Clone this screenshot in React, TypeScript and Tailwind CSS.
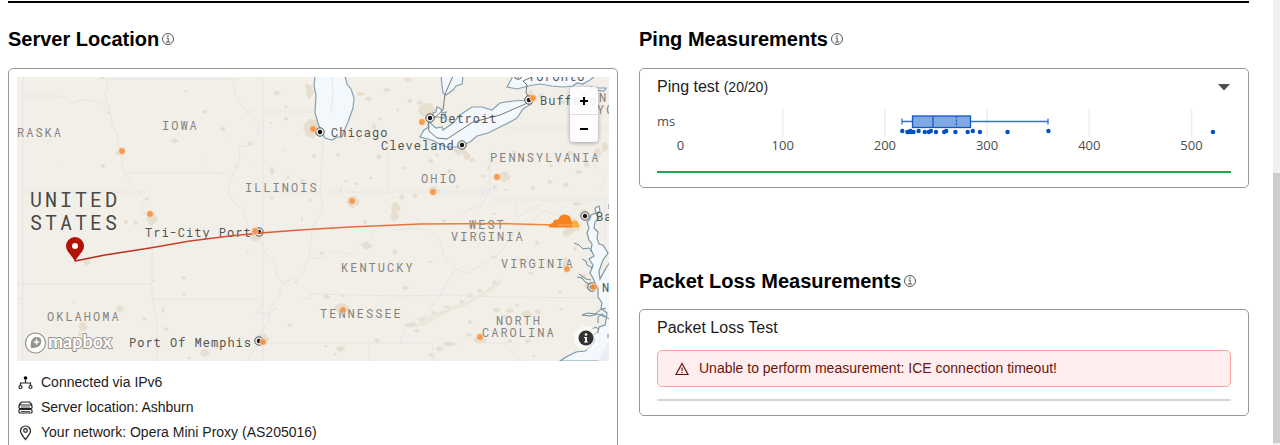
import type { ReactNode } from "react";

const pings = [217, 222, 223, 225, 226, 228, 233, 239, 243, 245, 250, 258, 260, 269, 281, 286, 293, 320, 360, 521];
const ticks = [0, 100, 200, 300, 400, 500];

const msToX = (ms: number) => 23.5 + ms * 1.022;

const states: [string, number, number][] = [
  ["RASKA", 17, 137],
  ["IOWA", 162, 130],
  ["ILLINOIS", 245, 192],
  ["OHIO", 421, 183],
  ["PENNSYLVANIA", 490, 162],
  ["WEST", 469, 229],
  ["VIRGINIA", 451, 241],
  ["VIRGINIA", 501, 268],
  ["KENTUCKY", 341, 272],
  ["TENNESSEE", 320, 318],
  ["NORTH", 496, 325],
  ["CAROLINA", 482, 337],
  ["OKLAHOMA", 47, 321],
  ["N", 599, 102],
  ["YO", 597, 114],
];

const cities: [string, number, number, number, number][] = [
  ["Chicago", 331, 137, 320, 132],
  ["Detroit", 440, 123, 430, 118],
  ["Cleveland", 381, 150, 462, 145],
  ["Toronto", 528, 81, 518, 75],
  ["Buffalo", 540, 105, 529, 100],
  ["Tri-City Port", 145, 237, 259, 232],
  ["Port Of Memphis", 129, 347, 259, 341],
  ["Ba", 596, 221, 585, 216],
  ["N", 602, 292, 592, 287],
];

const edgeNodes = [
  [122, 151], [150, 214], [313, 129], [422, 122], [533, 98], [352, 201], [433, 192], [497, 177],
  [255, 231], [263, 342], [343, 310], [480, 337], [567, 269], [594, 287],
];

// x, y, width, height of built-up areas
const urban = [
  [102, 78, 4, 3], [109, 113, 4, 3], [120, 153, 10, 5], [103, 166, 5, 4], [62, 163, 2, 2], [175, 141, 7, 5],
  [186, 91, 3, 2], [205, 112, 5, 4], [223, 129, 5, 4], [227, 140, 2, 2], [250, 144, 6, 5], [277, 93, 7, 5],
  [286, 107, 3, 3], [286, 119, 5, 4], [271, 123, 2, 3], [272, 171, 5, 9], [247, 112, 3, 3], [285, 150, 3, 2],
  [310, 92, 8, 14], [313, 129, 20, 20], [307, 86, 4, 5], [314, 156, 4, 4], [254, 162, 2, 2], [205, 160, 2, 2],
  [288, 177, 3, 4], [303, 181, 6, 4], [272, 198, 4, 4], [236, 166, 2, 3], [152, 219, 11, 14], [147, 199, 4, 3],
  [126, 222, 5, 4], [136, 223, 5, 5], [87, 262, 7, 7], [184, 278, 5, 4], [184, 294, 4, 4], [154, 281, 3, 3],
  [120, 309, 8, 7], [163, 310, 3, 6], [74, 302, 3, 2], [83, 327, 9, 10], [80, 334, 4, 5], [145, 319, 5, 3],
  [166, 329, 5, 4], [205, 353, 10, 8], [189, 358, 4, 3], [218, 347, 4, 3], [256, 236, 14, 12], [248, 252, 2, 3],
  [262, 339, 16, 11], [290, 325, 5, 4], [296, 282, 4, 2], [275, 309, 3, 2], [302, 219, 2, 6], [310, 200, 3, 4],
  [334, 92, 5, 4], [361, 94, 9, 4], [369, 99, 7, 5], [387, 90, 7, 4], [408, 80, 8, 5], [410, 101, 5, 5],
  [428, 111, 20, 16], [420, 103, 7, 5], [425, 132, 5, 7], [398, 110, 3, 4], [374, 127, 5, 7], [380, 119, 4, 3],
  [359, 139, 4, 4], [338, 155, 4, 4], [379, 157, 6, 5], [405, 168, 4, 3], [371, 178, 4, 3], [346, 181, 4, 3],
  [341, 190, 3, 3], [353, 202, 14, 12], [357, 184, 5, 3], [396, 208, 10, 12], [402, 197, 6, 5], [395, 216, 9, 12],
  [434, 191, 12, 10], [415, 196, 5, 5], [431, 161, 5, 4], [437, 155, 4, 3], [460, 151, 13, 9], [467, 156, 8, 9],
  [450, 171, 5, 5], [472, 160, 6, 4], [457, 187, 3, 4], [483, 176, 5, 3], [505, 177, 12, 11], [495, 187, 5, 4],
  [506, 190, 4, 3], [489, 168, 4, 5], [531, 97, 7, 14], [541, 96, 5, 5], [563, 102, 8, 4], [514, 152, 5, 4],
  [551, 166, 4, 3], [533, 188, 5, 4], [550, 182, 6, 4], [566, 185, 6, 5], [579, 172, 8, 4], [587, 165, 7, 5],
  [598, 153, 8, 10], [605, 147, 7, 10], [570, 153, 5, 5], [577, 204, 8, 4], [573, 226, 17, 15], [567, 233, 9, 8],
  [584, 214, 10, 10], [581, 204, 4, 3], [367, 246, 11, 8], [395, 252, 5, 5], [365, 222, 4, 5], [322, 253, 5, 4],
  [333, 228, 3, 4], [396, 271, 6, 2], [406, 288, 8, 4], [430, 262, 5, 2], [342, 308, 16, 10], [327, 297, 6, 4],
  [343, 296, 4, 3], [377, 341, 6, 5], [341, 349, 9, 6], [326, 346, 4, 3], [335, 354, 4, 3], [412, 325, 16, 5],
  [424, 320, 11, 6], [417, 331, 6, 4], [434, 313, 5, 4], [447, 307, 8, 3], [462, 302, 6, 4], [470, 296, 7, 5],
  [480, 291, 6, 4], [495, 283, 6, 5], [497, 310, 8, 5], [510, 311, 9, 5], [505, 317, 5, 4], [517, 305, 4, 3],
  [450, 344, 14, 5], [440, 349, 9, 5], [432, 355, 6, 4], [480, 340, 14, 8], [469, 335, 6, 4], [470, 322, 5, 4],
  [527, 314, 12, 7], [538, 312, 7, 5], [528, 341, 6, 5], [510, 341, 5, 4], [550, 332, 6, 5], [561, 309, 4, 3],
  [534, 356, 4, 3], [566, 265, 7, 16], [531, 273, 5, 3], [494, 257, 6, 3], [521, 260, 5, 4], [511, 235, 5, 4],
  [537, 243, 4, 5], [549, 226, 5, 3], [463, 241, 4, 4], [471, 226, 5, 3], [590, 286, 12, 9], [583, 277, 6, 7],
  [560, 292, 4, 3], [575, 249, 4, 4], [494, 214, 4, 2], [444, 221, 5, 3],
];

const blob = ([x, y, w, h]: number[]) => {
  const a = w / 2;
  const b = h / 2;
  return `M${x - a} ${y}L${x - a * 0.8} ${y - b * 0.6}L${x - a * 0.3} ${y - b}L${x + a * 0.4} ${y - b * 0.9}L${x + a * 0.6} ${y - b * 0.4}L${x + a} ${y - b * 0.2}L${x + a * 0.7} ${y + b * 0.6}L${x + a * 0.3} ${y + b * 0.6}L${x} ${y + b}L${x - a * 0.6} ${y + b * 0.7}Z`;
};

function ServerMap() {
  return (
    <svg
      viewBox="17 77 592 284"
      preserveAspectRatio="xMidYMid slice"
      role="img"
      aria-label="Map of the route from your network to the server"
      className="block h-[284px] w-full bg-[#f2efe9]"
    >
      <defs>
        <linearGradient id="route" gradientUnits="userSpaceOnUse" x1="75" y1="0" x2="555" y2="0">
          <stop offset="0" stopColor="#b9201a" />
          <stop offset="0.5" stopColor="#e06a3c" />
          <stop offset="1" stopColor="#f6863a" />
        </linearGradient>
      </defs>

      <path d={urban.map(blob).join("")} fill="#e6dece" />

      {/* state lines and rivers */}
      <g fill="none" stroke="#e6e5e6" strokeWidth="1">
        <path d="M23 77V361M17 192H145M263 77V361M388 138V195M263 192H490M17 96H60L66 99L72 103L80 100L97 101L104 107L110 112L112 125L117 134L118 145L121 152L122 163L125 173L131 184L137 190L145 200L141 208L145 214L152 225V283M106 79H233M106 79L108 88L105 95L110 112" />
        <path d="M233 79L235 95L247 112L252 117L259 125L258 136L252 145L238 147L240 157L237 168L231 178L222 173H125M247 112H335M231 178L228 190L232 200L243 210L248 225L258 237L265 253L275 260L277 277L283 283L278 299L270 308L269 322L262 330L256 345L248 361M283 283L302 276L309 258L312 230L323 208L320 195L323 140" />
        <path d="M17 284H152V299L157 318V361M152 299H258L263 304L256 313H270M17 299H23M270 343H433V361M300 299H310V294L400 296L450 295L500 297L609 298M369 343V361M484 343H505L520 361" />
        <path d="M309 258L322 258L331 251L350 254L361 244L372 239L373 230L385 226L398 230L408 228L430 230L440 241L444 256L455 269L468 273L490 260L500 253L512 235L528 224L545 210L556 215L568 205M455 269L440 295L424 317L406 324L400 343M460 216L468 210L482 205L490 190V150M490 200H607M516 200V217L538 206L548 200M508 128H609M603 150L594 165L606 178L600 190M605 196V240" />
      </g>
      <path d="M412 328L424 319L434 313L445 310L453 306L466 303L478 295L488 289L496 283L501 278L500 284L493 290L482 296L474 301L464 306L448 312L436 318L426 325Z" fill="#ece6da" />

      {/* lakes */}
      <g fill="#f3f8fc" stroke="#84a0b0" strokeWidth="1.2">
        <path d="M315 76L314 86L316 95L315 113L318 123L321 131L325 138L332 140L337 137L342 137L345 129L348 122L353 108L354 98L351 89L347 84L345 76Z" />
        <path d="M441 76L442 85L443 93L446 95L453 90L456 86L462 84L463 76Z" />
        <path d="M434 117L433 113L436 112L437 107L441 109L442 113L446 112L444 118L438 117Z" />
        <path d="M428 121L429 127L424 130L420 137L428 139L434 141L439 144L447 147L457 147L470 142L477 136L488 133L500 127L510 122L517 118L523 109L531 104L527 100L513 101L500 103L492 110L482 107L472 107L463 113L458 117L453 123L443 130L442 127L436 128Z" />
        <path d="M513 76L507 87L517 89L528 86L540 84L552 86L563 87L573 86L577 83L583 84L590 80L595 76Z" />
        <path d="M590 87L596 88H606L604 91L596 90Z" />
      </g>
      <g fill="none" stroke="#77797c" strokeWidth="1">
        <path d="M453 76L445 94L443 110L433 119L428 124L429 131L437 138L447 139L473 122L500 115L530 102L526 92L527 85L523 81L532 77" />
      </g>
      <path d="M332 77L333 95L331 112H335" fill="none" stroke="#e5e8ec" />

      {/* Chesapeake Bay and the Atlantic coast */}
      <path
        d="M599 206L595 208L596 213L591 215L590 219L587 222L589 228L587 233L589 240L592 244L591 250L594 256L589 259L593 265L590 273L593 278L595 283L598 288L598 297L602 303L601 308L607 313L606 320L605 325L599 327L598 332L593 335L595 341L590 347L585 351L576 352L570 355L566 357L560 361H610V262L606 268L600 279L599 271L603 260L608 253L603 245L599 244L597 238L598 232L594 228L595 222L599 218L596 214L600 211Z"
        fill="#f3f8fc"
        stroke="#7b98a8"
        strokeWidth="1.2"
      />
      <path d="M609 340L598 361H610Z" fill="#e9eff5" />
      <path
        d="M574 243L579 245L583 249L589 248L592 252M582 259L586 261L587 265L593 268M577 277L582 278L585 282L591 285M579 274L586 279L591 280M582 315L588 313L595 314L600 310L606 308M582 315L590 316L598 314L605 317M598 323L598 317L602 314L609 319M592 329L596 327L599 330M609 204V209M608 334V338"
        fill="none"
        stroke="#6d8b9c"
      />

      <g className="font-['Roboto_Mono','DejaVu_Sans_Mono','Liberation_Mono',monospace]">
        <g className="text-[12px] tracking-[2px]" fill="#85837f">
          {states.map(([name, x, y]) => (
            <text key={`${name}-${x}`} x={x} y={y}>
              {name}
            </text>
          ))}
        </g>
        <g className="text-[20px] tracking-[3px]" fill="#484846">
          <text x="30" y="207">UNITED</text>
          <text x="30" y="230">STATES</text>
        </g>
        <text x="477" y="196" className="text-[10px]" fill="#f6f5f3" stroke="#dddddf" strokeWidth="1" paintOrder="stroke">
          40°
        </text>
        {cities.map(([name, x, y, cx, cy]) => (
          <g key={`${name}-${x}`}>
            <circle cx={cx} cy={cy} r="4.2" fill="#f2efe9" stroke="#444" strokeWidth="0.9" />
            <circle cx={cx} cy={cy} r="2.2" fill="#111" />
            <text x={x} y={y} className="text-[12px] tracking-[1px]" fill="#555553">
              {name}
            </text>
          </g>
        ))}
      </g>

      <polyline
        points="75,261 105,255 150,248 190,241 230,236 260,233 300,230 350,227 420,224 500,223.5 555,225"
        fill="none"
        stroke="url(#route)"
        strokeWidth="1.5"
      />
      {edgeNodes.map(([x, y]) => (
        <circle key={`${x}-${y}`} cx={x} cy={y} r="3.4" fill="#f6923f" fillOpacity="0.9" stroke="#f8f0e6" strokeWidth="0.6" />
      ))}

      {/* destination cloud */}
      <path d="M571 227.500C571 223 572 220.500 575 220.500C578 221 579 224 579 227.500Z" fill="#fbad41" />
      <path d="M549 227.500C549 224.500 551 223 553 223C553 220 556 218.500 558 220C559 216 562 214 565 214.500C569 215 571 217 571 220C572.500 222 572.500 225 572 227.500Z" fill="#f6821f" />
      <path d="M557 225H574" stroke="#fbb57a" strokeWidth="0.8" />

      {/* pin */}
      <path d="M75 262C73 256 66 252 66 246A9 9 0 0 1 84 246C84 252 77 256 75 262Z" fill="#b31208" />
      <circle cx="75" cy="246" r="3" fill="#fff" />

      {/* mapbox mark */}
      <circle cx="35.5" cy="343" r="10" fill="#fff" stroke="#969491" strokeWidth="1.2" />
      <path d="M31 348C30 341 32 337 37 337C41 337 42 340 41 343C40 347 36 348 31 348Z" fill="#969491" />
      <path d="M36.500 338.500L37.500 341L40 342L37.500 343L36.500 345.500L35.500 343L33 342L35.500 341Z" fill="#fff" />
      <text
        x="48"
        y="348"
        className="font-['Lato',sans-serif] text-[18px] font-bold"
        fill="#fff"
        stroke="#969491"
        strokeWidth="2"
        strokeLinejoin="round"
        paintOrder="stroke"
      >
        mapbox
      </text>
    </svg>
  );
}

function PingChart() {
  return (
    <svg viewBox="0 0 574 48" role="img" aria-label="Ping times in milliseconds" className="block w-full">
      <g stroke="#eeeeee" strokeWidth="1.500">
        {ticks.slice(1).map((t) => (
          <line key={t} x1={msToX(t)} x2={msToX(t)} y1="0" y2="28" />
        ))}
      </g>
      <g stroke="#3873cf" strokeWidth="1.300" fill="none">
        <path d="M245 12.500H255M313.500 12.500H391M245 9.500V15.500M391 9.500V15.500" />
        <rect x="255.500" y="7" width="58" height="11.500" fill="#80a8e2" stroke="#1558c7" />
        <path d="M276 7V18.500" stroke="#1558c7" />
        <path d="M299.500 7V18.500" stroke="#1558c7" strokeDasharray="2 1.500" />
      </g>
      {pings.map((p, i) => (
        <circle key={p} cx={msToX(p)} cy={i % 3 === 0 ? 22 : 23} r="2.200" fill="#0051c3" />
      ))}
      <g className="font-['Open_Sans',sans-serif] text-[13px]" fill="#4d4d4d">
        <text x="0" y="17">ms</text>
        {ticks.map((t) => (
          <text key={t} x={msToX(t)} y="41" textAnchor="middle">
            {t}
          </text>
        ))}
      </g>
    </svg>
  );
}

function SectionHeading({ children }: { children: string }) {
  return (
    <div className="flex h-6 items-center gap-0.5">
      <h2 className="text-[20px] leading-6 font-bold text-black">{children}</h2>
      <button type="button" aria-label={`About ${children}`}>
        <svg viewBox="0 0 14 14" className="size-3.5" fill="none" stroke="#555">
          <circle cx="7" cy="7" r="5.500" />
          <path d="M5.500 6H7.200V10M5 10H9.200" />
          <path d="M6.300 4H7.700" strokeWidth="1.300" />
        </svg>
      </button>
    </div>
  );
}

function InfoRow({ icon, children }: { icon: ReactNode; children: ReactNode }) {
  return (
    <li className="flex h-[25px] items-center gap-2">
      <svg viewBox="0 0 16 16" className="size-4" fill="none" stroke="#222" strokeWidth="1.200">
        {icon}
      </svg>
      <span>{children}</span>
    </li>
  );
}

export default function App() {
  return (
    <div className="flex h-screen overflow-hidden bg-white font-['Liberation_Sans',Arial,sans-serif] text-[#1d1d1d]">
      <main className="min-w-0 flex-1 pt-px pr-6 pl-2">
        <div className="h-0.5 bg-black" />
        <div className="grid grid-cols-2 items-start gap-[21px] pt-6">
          <section>
            <SectionHeading>Server Location</SectionHeading>
            <div className="mt-[17px] rounded-[5px] border border-[#999] px-2 pt-2 pb-8">
              <div className="relative">
                <ServerMap />
                <div className="absolute top-2.5 right-[11px] flex w-7 flex-col rounded-sm bg-white/90 text-black shadow-[0_1px_4px_rgba(0,0,0,0.35)]">
                  <button type="button" aria-label="Zoom in" className="flex h-7 items-center justify-center border-b border-[#ddd]">
                    <svg viewBox="0 0 10 10" className="size-2.5" stroke="#000" strokeWidth="2">
                      <path d="M1 5H9M5 1V9" />
                    </svg>
                  </button>
                  <button type="button" aria-label="Zoom out" className="flex h-[27px] items-center justify-center">
                    <svg viewBox="0 0 10 10" className="size-2.5" stroke="#000" strokeWidth="2">
                      <path d="M1 5H9" />
                    </svg>
                  </button>
                </div>
                <button
                  type="button"
                  aria-label="Map attribution"
                  className="absolute right-[11px] bottom-[11px] flex size-6 items-center justify-center rounded-full bg-white/60"
                >
                  <svg viewBox="0 0 16 16" className="size-4">
                    <circle cx="8" cy="8" r="7.500" fill="#333" />
                    <circle cx="8" cy="4.500" r="1.300" fill="#fff" />
                    <path d="M6 7H9V11.500H10V12.500H6V11.500H7V8H6Z" fill="#fff" />
                  </svg>
                </button>
              </div>
              <ul className="mt-[9px] text-[14px]">
                <InfoRow
                  icon={
                    <>
                      <circle cx="8.500" cy="3" r="1.800" fill="#000" stroke="none" />
                      <path d="M8.500 4.500V8M3.500 10.500V8H13.500V10.500" />
                      <circle cx="3.500" cy="12" r="1.500" />
                      <circle cx="13.500" cy="12" r="1.500" />
                    </>
                  }
                >
                  Connected via IPv6
                </InfoRow>
                <InfoRow
                  icon={
                    <>
                      <path d="M2 5L4.500 2H12.500L15 5" />
                      <rect x="2" y="5" width="13" height="3.500" rx="1" />
                      <rect x="2" y="9.500" width="13" height="3.500" rx="1" />
                      <path d="M4 7H13M4 11.500H13" strokeWidth="0.800" />
                    </>
                  }
                >
                  Server location: Ashburn
                </InfoRow>
                <InfoRow
                  icon={
                    <>
                      <path d="M8.500 14.500C7 12 3.500 9 3.500 6A5 5 0 0 1 13.500 6C13.500 9 10 12 8.500 14.500Z" />
                      <circle cx="8.500" cy="5.500" r="1.800" />
                    </>
                  }
                >
                  Your network: Opera Mini Proxy (AS205016)
                </InfoRow>
              </ul>
            </div>
          </section>

          <div>
            <section>
              <SectionHeading>Ping Measurements</SectionHeading>
              <div className="mt-[17px] rounded-[5px] border border-[#999] px-[17px] pt-1.5 pb-3.5">
                <button type="button" aria-expanded="false" className="flex h-6 w-full items-center justify-between">
                  <span className="text-[16px]">
                    Ping test <span className="text-[14px]">(20/20)</span>
                  </span>
                  <svg viewBox="0 0 14 8" className="h-2 w-3.5">
                    <path d="M1 1H13L7 7.500Z" fill="#4d4d4d" />
                  </svg>
                </button>
                <div className="mt-2.5">
                  <PingChart />
                </div>
                <div className="mt-3.5 h-0.5 bg-[#1fa94c]" />
              </div>
            </section>

            <section className="mt-[81px]">
              <SectionHeading>Packet Loss Measurements</SectionHeading>
              <div className="mt-4 rounded-[5px] border border-[#999] px-[17px] pt-1.5 pb-3.5">
                <h3 className="text-[16px] leading-6">Packet Loss Test</h3>
                <div role="alert" className="mt-2.5 flex h-[37px] items-center gap-2.5 rounded-[5px] border border-[#ffa39e] bg-[#ffeeed] px-[17px] text-[14px] text-[#6b1410]">
                  <svg viewBox="0 0 14 14" className="size-3.5" fill="none" stroke="#6b1410" strokeWidth="1.200">
                    <path d="M7 1.500L13 12.500H1Z" />
                    <path d="M7 5.500V9M7 10V11.200" />
                  </svg>
                  <span>Unable to perform measurement: ICE connection timeout!</span>
                </div>
                <div className="mt-3 h-0.5 bg-[#d5d5d5]" />
              </div>
            </section>
          </div>
        </div>
      </main>
      <div className="flex w-[7px] flex-col bg-[#f1f1f1] pt-[173px] pb-0.5">
        <div className="flex-1 bg-[#cdcdcd]" />
      </div>
    </div>
  );
}
